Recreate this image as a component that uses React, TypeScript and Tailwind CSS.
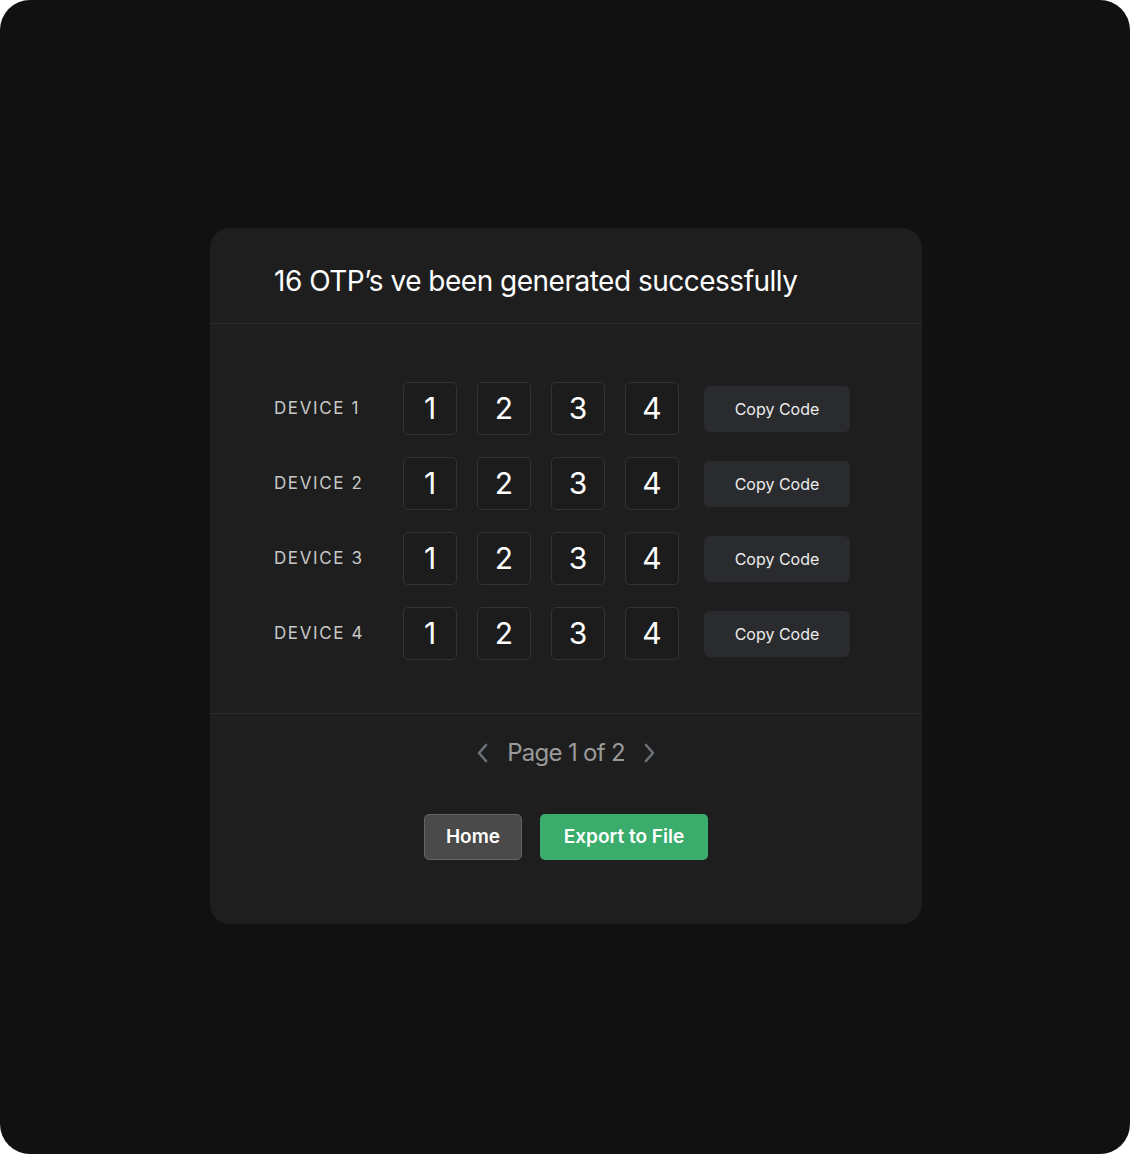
import React from "react";

const devices = [1, 2, 3, 4];
const digits = ["1", "2", "3", "4"];

export default function App() {
  return (
    <div className="w-[1130px] h-[1154px] bg-white" style={{ fontFamily: "Inter, 'Noto Sans', sans-serif" }}>
      <div className="w-full h-full bg-[#111111] rounded-[30px] flex items-start justify-center pt-[228px] pl-[2px]">
        <div className="w-[712px] h-[696px] bg-[#1e1e1e] rounded-[20px] flex flex-col">
          <div className="h-[96px] shrink-0 border-b border-[#2a2a2a] flex items-center pl-[64px] pt-[11px]">
            <h1 className="text-[28px] text-white tracking-[-0.5px] font-normal">16 OTP’s ve been generated successfully</h1>
          </div>
          <div className="h-[390px] shrink-0 border-b border-[#2a2a2a] pl-[64px] pt-[58px] flex flex-col gap-[22px]">
            {devices.map((d) => (
              <div key={d} className="flex items-center h-[53px]">
                <div className="w-[129px] text-[17px] tracking-[1.6px] text-[#c8c8c8]">DEVICE {d}</div>
                <div className="flex gap-[20px]">
                  {digits.map((n) => (
                    <div
                      key={n}
                      className="w-[54px] h-[53px] rounded-[5px] border border-[#333] bg-[#1c1c1c] flex items-center justify-center text-[30px] text-white"
                    >
                      {n}
                    </div>
                  ))}
                </div>
                <button className="ml-[25px] w-[146px] h-[46px] rounded-[6px] bg-[#2a2b2e] text-[16px] text-[#ececec]">
                  Copy Code
                </button>
              </div>
            ))}
          </div>
          <div className="flex flex-col items-center">
            <div className="flex items-center gap-[16px] mt-[22px] h-[34px]">
              <svg width="16" height="24" viewBox="0 0 16 24" fill="none">
                <path d="M11 4 L4 12 L11 20" stroke="#6b7079" strokeWidth="2.6" strokeLinecap="round" strokeLinejoin="round" />
              </svg>
              <span className="text-[24px] text-[#9a9a9a] tracking-[-0.7px]">Page 1 of 2</span>
              <svg width="16" height="24" viewBox="0 0 16 24" fill="none">
                <path d="M5 4 L12 12 L5 20" stroke="#6b7079" strokeWidth="2.6" strokeLinecap="round" strokeLinejoin="round" />
              </svg>
            </div>
            <div className="flex gap-[18px] mt-[44px]">
              <button className="w-[98px] h-[46px] rounded-[5px] bg-[#4a4a4a] border-[1.5px] border-[#646464] text-white text-[19px] font-semibold">
                Home
              </button>
              <button className="w-[168px] h-[46px] rounded-[5px] bg-[#3aad6c] text-white text-[19px] font-semibold">
                Export to File
              </button>
            </div>
          </div>
        </div>
      </div>
    </div>
  );
}
